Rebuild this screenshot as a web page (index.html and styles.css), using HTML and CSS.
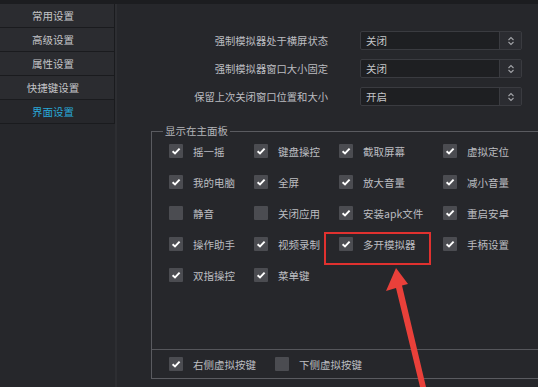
FILE: index.html
```html
<!DOCTYPE html>
<html lang="zh">
<head>
    <meta charset="UTF-8">
    <meta name="viewport" content="width=device-width, initial-scale=1.0">
    <title>界面设置</title>
    <link rel="stylesheet" href="styles.css">
</head>
<body>
    <div class="topbar"></div>
    <div class="window">
        <nav class="sidebar">
            <div class="nav-item">常用设置</div>
            <div class="nav-item">高级设置</div>
            <div class="nav-item">属性设置</div>
            <div class="nav-item">快捷键设置</div>
            <div class="nav-item active">界面设置</div>
        </nav>

        <main class="content">
            <div class="options">
                <div class="option-label">强制模拟器处于横屏状态</div>
                <div class="select">
                    <span class="select-value">关闭</span>
                    <span class="select-btn"><svg width="8" height="10" viewBox="0 0 8 10"><path d="M1.5 4 L4 1.5 L6.5 4 M1.5 6 L4 8.5 L6.5 6" fill="none" stroke="#a2a3a8" stroke-width="1.1"/></svg></span>
                </div>

                <div class="option-label">强制模拟器窗口大小固定</div>
                <div class="select">
                    <span class="select-value">关闭</span>
                    <span class="select-btn"><svg width="8" height="10" viewBox="0 0 8 10"><path d="M1.5 4 L4 1.5 L6.5 4 M1.5 6 L4 8.5 L6.5 6" fill="none" stroke="#a2a3a8" stroke-width="1.1"/></svg></span>
                </div>

                <div class="option-label">保留上次关闭窗口位置和大小</div>
                <div class="select">
                    <span class="select-value">开启</span>
                    <span class="select-btn"><svg width="8" height="10" viewBox="0 0 8 10"><path d="M1.5 4 L4 1.5 L6.5 4 M1.5 6 L4 8.5 L6.5 6" fill="none" stroke="#a2a3a8" stroke-width="1.1"/></svg></span>
                </div>
            </div>

            <fieldset class="panel">
                <legend>显示在主面板</legend>
                <div class="check-grid">
                    <div class="check"><span class="box on"></span>摇一摇</div>
                    <div class="check"><span class="box on"></span>键盘操控</div>
                    <div class="check"><span class="box on"></span>截取屏幕</div>
                    <div class="check"><span class="box on"></span>虚拟定位</div>

                    <div class="check"><span class="box on"></span>我的电脑</div>
                    <div class="check"><span class="box on"></span>全屏</div>
                    <div class="check"><span class="box on"></span>放大音量</div>
                    <div class="check"><span class="box on"></span>减小音量</div>

                    <div class="check"><span class="box"></span>静音</div>
                    <div class="check"><span class="box"></span>关闭应用</div>
                    <div class="check"><span class="box on"></span>安装apk文件</div>
                    <div class="check"><span class="box on"></span>重启安卓</div>

                    <div class="check"><span class="box on"></span>操作助手</div>
                    <div class="check"><span class="box on"></span>视频录制</div>
                    <div class="check"><span class="box on"></span>多开模拟器</div>
                    <div class="check"><span class="box on"></span>手柄设置</div>

                    <div class="check"><span class="box on"></span>双指操控</div>
                    <div class="check"><span class="box on"></span>菜单键</div>
                </div>

                <div class="panel-footer">
                    <div class="check wide"><span class="box on"></span>右侧虚拟按键</div>
                    <div class="check"><span class="box"></span>下侧虚拟按键</div>
                </div>
            </fieldset>
        </main>
    </div>

    <!-- 标注 -->
    <div class="highlight"></div>
    <svg class="arrow" width="538" height="387" viewBox="0 0 538 387">
        <polygon points="396,268 408,284 402,285.5 426,387 420,387 396,288 386,291" fill="#e9403a"/>
    </svg>
</body>
</html>
```

FILE: styles.css
```css
* {
    margin: 0;
    padding: 0;
    box-sizing: border-box;
    font-family: 'Noto Sans CJK SC', 'Liberation Sans', sans-serif;
}

body {
    width: 538px;
    height: 387px;
    overflow: hidden;
    background-color: #26272b;
    position: relative;
    font-size: 10.5px;
    color: #bcbdc1;
}

.topbar {
    height: 4px;
    background-color: #1c1d20;
}

.window {
    display: flex;
    height: 383px;
    overflow: hidden;
}

.sidebar {
    width: 115px;
    flex-shrink: 0;
}

.nav-item {
    height: 24px;
    line-height: 23px;
    text-align: center;
    background-color: #2b2c30;
    border-bottom: 1px solid #1a1b1e;
    border-right: 1px solid #1a1b1e;
    color: #c4c5c8;
    padding-right: 8px;
}

.nav-item.active {
    background-color: #26272b;
    color: #29a8d8;
}

.content {
    flex: 1;
    border-left: 2px solid #2d2e32;
    padding-top: 27px;
}

.options {
    display: grid;
    grid-template-columns: 211px 162px;
    column-gap: 32px;
    row-gap: 9px;
    grid-auto-rows: 19px;
}

.option-label {
    text-align: right;
    line-height: 19px;
    font-size: 10.3px;
}

.select {
    display: flex;
    background-color: #1e1f22;
    border: 1px solid #3a3b40;
    border-radius: 2px;
}

.select-value {
    flex: 1;
    line-height: 17px;
    padding-left: 5px;
    color: #c4c5c8;
}

.select-btn {
    width: 22px;
    display: flex;
    align-items: center;
    justify-content: center;
    background-color: #2b2c31;
    border-left: 1px solid #3a3b40;
}

.panel {
    margin: 18px 0 0 34px;
    width: 420px;
    border: 1px solid #5a5b60;
    padding: 3px 0 0 17px;
}

.panel legend {
    line-height: 14px;
    padding: 0 2px;
    margin-left: -6px;
    color: #b4b5b9;
}

.check-grid {
    display: grid;
    grid-template-columns: 85px 85px 104px 90px;
    grid-auto-rows: 20px;
    row-gap: 11px;
    margin-bottom: 64px;
}

.check {
    display: flex;
    align-items: center;
    gap: 10px;
    white-space: nowrap;
}

.box {
    width: 14px;
    height: 14px;
    flex-shrink: 0;
    background-color: #4b4c51;
    border-radius: 1px;
}

.box.on {
    background-image: url("data:image/svg+xml,%3Csvg xmlns='http://www.w3.org/2000/svg' width='14' height='14' viewBox='0 0 14 14'%3E%3Cpath d='M3.6 7.2 L6 9.4 L10.6 4.6' fill='none' stroke='white' stroke-width='1.9'/%3E%3C/svg%3E");
}

.panel-footer {
    display: flex;
    align-items: center;
    height: 29px;
    border-top: 1px solid #55565b;
    margin-left: -17px;
    padding-left: 17px;
}

.check.wide {
    width: 106px;
}

.highlight {
    position: absolute;
    left: 324px;
    top: 232px;
    width: 107px;
    height: 33px;
    border: 2px solid #e0312f;
}

.arrow {
    position: absolute;
    left: 0;
    top: 0;
    pointer-events: none;
}
```
